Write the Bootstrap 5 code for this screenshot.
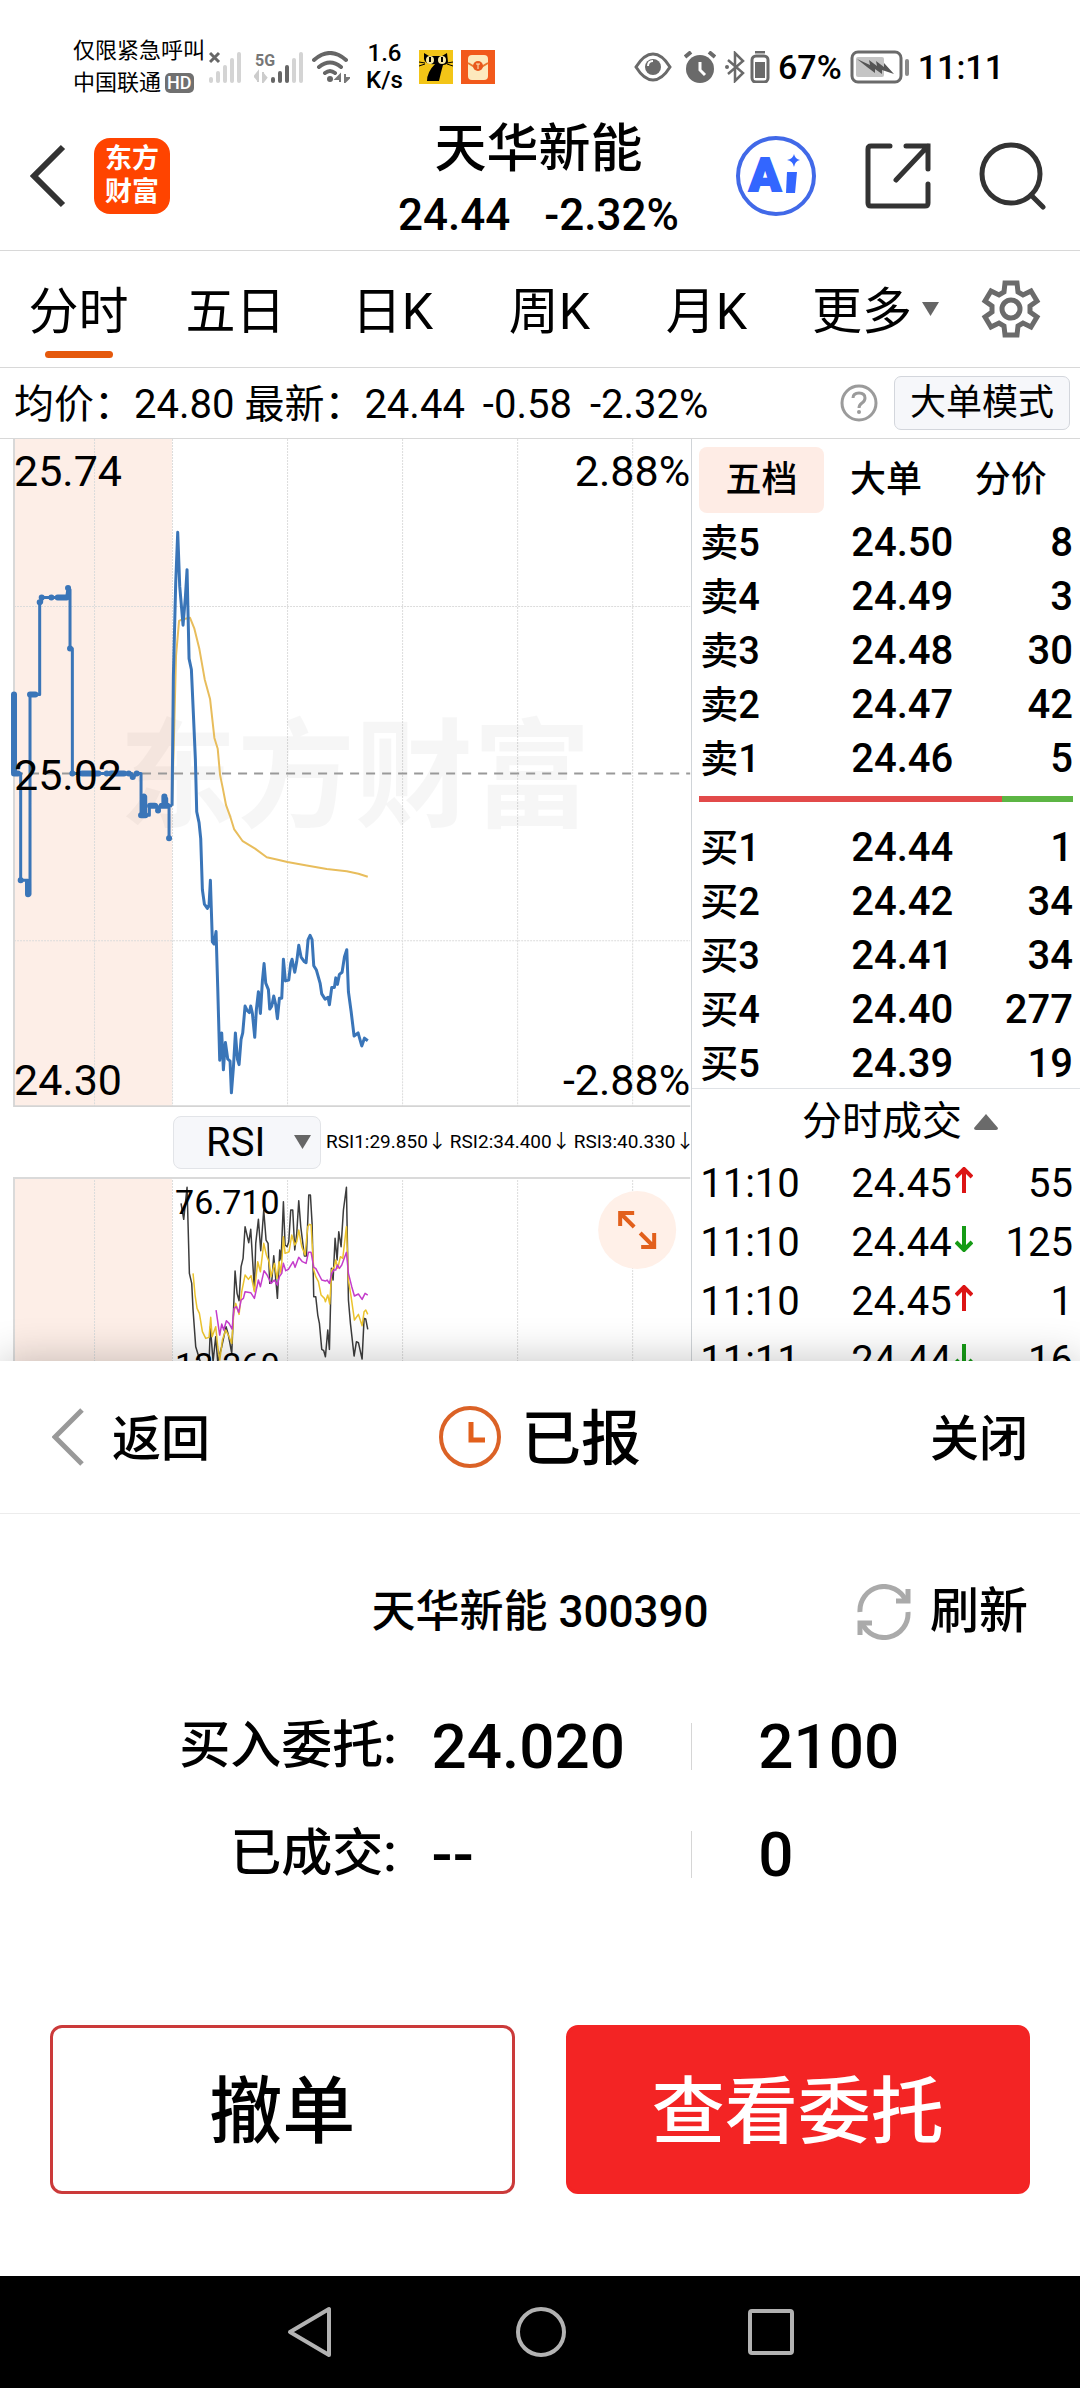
<!DOCTYPE html>
<html lang="zh-CN">
<head>
<meta charset="utf-8">
<meta name="viewport" content="width=device-width, initial-scale=1">
<title>天华新能 300390</title>
<link href="https://cdn.jsdelivr.net/npm/bootstrap@5.3.0/dist/css/bootstrap.min.css" rel="stylesheet">
<style>
  body { font-family: Roboto, "Noto Sans CJK SC", sans-serif; color: #000; background: #fff; }
  button { font-family: inherit; color: inherit; border: 0; background: none; padding: 0; }
  svg { display: block; flex: none; }
  .medium { font-weight: 500; }
  /* Han glyphs ride high in a Roboto line box */
  .han { display: block; padding-top: 6px; }

  /* status bar */
  .statusbar { height: 101px; padding: 32px 76px 0 73px; }
  .carrier { font-size: 22px; line-height: 32px; }
  .hd-tag { font-size: 18px; line-height: 20px; background: #707070; color: #fff; border-radius: 5px; padding: 0 2px; }
  .speed { font-size: 24px; line-height: 27px; }
  .clock { font-size: 34px; line-height: 40px; }

  /* title bar */
  .titlebar { height: 150px; padding: 0 33px 0 30px; border-bottom: 1px solid #d8d8d8; }
  .app-logo { width: 76px; height: 76px; margin-left: 28px; border-radius: 16px; background: #ff4400; color: #fff; font-size: 27px; line-height: 33px; font-weight: 700; }
  .stock-head { padding-top: 12px; }
  .stock-name { font-size: 52px; line-height: 66px; font-weight: 500; margin: 0; }
  .stock-quote { font-size: 44px; line-height: 64px; gap: 34px; }
  .tool-gap { gap: 48px; }

  /* period tabs */
  .periods { height: 117px; padding-right: 24px; border-bottom: 1px solid #d8d8d8; font-size: 50px; }
  .period { flex: 157 1 0; position: relative; }
  .period-more { flex: 181 1 0; gap: 10px; }
  .period-set { flex: 90 1 0; }
  .period.active::after { content: ""; position: absolute; left: 50%; bottom: 9px; width: 68px; height: 7px; margin-left: -34px; border-radius: 4px; background: #e5590c; }

  .infobar { height: 71px; padding: 0 10px 0 14px; border-bottom: 1px solid #d8d8d8; font-size: 40px; }
  .info-nums { gap: 18px; padding-top: 4px; }
  .mode-btn { font-size: 36px; line-height: 52px; padding: 0 15px; border: 1px solid #d3d6dc; border-radius: 7px; background: #f6f7fa; }

  /* market area, cut by the sheet */
  .market { flex: 1 1 0; min-height: 0; overflow: hidden; }
  .chart-col { width: 64%; }
  .chart-col > svg { width: 100%; height: auto; }
  .book-col { width: 36%; border-left: 1px solid #d0d4d8; }
  .rsi-bar { height: 70px; padding-left: 173px; gap: 5px; }
  .rsi-pick { flex: none; width: 148px; height: 53px; }
  .rsi-pick select { appearance: none; width: 100%; height: 100%; padding: 0 0 0 32px; font: 40px Roboto, sans-serif; color: #000; background: #f6f7fa; border: 1px solid #e2e4e8; border-radius: 8px; }
  .rsi-pick svg { position: absolute; right: 10px; top: 19px; pointer-events: none; }
  .rsi-vals { font-size: 19px; gap: 3px; }

  .book-tabs { padding: 8px 7px 0; }
  .book-tab { flex: 1 1 0; height: 66px; border-radius: 8px; font-size: 36px; font-weight: 500; }
  .book-tab.active { background: #feece5; }
  .quotes { width: 100%; table-layout: fixed; font-size: 40px; }
  .quotes th, .quotes td { padding: 6px 0 0; line-height: 48px; font-weight: 500; text-align: left; white-space: nowrap; }
  .quotes th { padding-left: 8px; font-size: 38px; width: 159px; }
  .quotes td:last-child { text-align: right; padding-right: 7px; }
  .strength { height: 6px; margin: 13px 7px 16px; }
  .strength-buy { background: #e24a4a; }
  .strength-sell { flex: 1 1 0; background: #5cb544; }
  .deals-head { width: 100%; height: 66px; padding-left: 28px; border-top: 1px solid #dfe2e6; font-size: 40px; gap: 12px; }
  .quotes.deals th, .quotes.deals td { padding-top: 0; line-height: 59px; font-weight: 400; font-size: 40px; }
  .deals svg { display: inline-block; margin: 0 0 4px 3px; vertical-align: baseline; }

  /* order sheet */
  .sheet { position: relative; background: #fff; box-shadow: 0 0 40px rgba(0, 0, 0, .24); }
  .sheet-head { height: 153px; padding: 0 52px; border-bottom: 1px solid #ececec; }
  .sheet-link { font-size: 49px; font-weight: 500; gap: 28px; }
  .sheet-title { font-size: 60px; font-weight: 500; gap: 20px; margin: 0; }
  .sheet-side { flex: 1 1 0; }
  .order-name { font-size: 44px; height: 76px; margin-top: 60px; padding: 0 52px; }
  .order-name .sheet-link { gap: 18px; }
  .order-rows { padding-top: 42px; }
  .order-row { height: 108px; font-size: 62px; font-weight: 500; }
  .order-label { width: 37%; padding-right: 3px; font-size: 51px; text-align: right; }
  .order-price { width: 27%; padding-left: 32px; }
  .order-qty { padding-left: 66px; }
  .order-rule { width: 1px; height: 47px; background: #d6d6d6; }
  .order-actions { padding: 117px 50px 82px; gap: 51px; }
  .act { flex: 1 1 0; height: 169px; border-radius: 12px; font-size: 73px; font-weight: 500; }
  .act-cancel { border: 3px solid #cb3a3a; }
  .act-view { background: #f32424; border: 3px solid #f32424; color: #fff; }

  .navkeys { height: 112px; background: #000; gap: 182px; }
</style>
<script src="https://cdn.jsdelivr.net/npm/bootstrap@5.3.0/dist/js/bootstrap.bundle.min.js"></script>
</head>
<body class="d-flex flex-column vh-100 overflow-hidden">

<div class="statusbar d-flex align-items-center justify-content-between">
  <div class="d-flex align-items-center">
    <div class="carrier text-nowrap">
      <div>仅限紧急呼叫</div>
      <div class="d-flex align-items-center">中国联通<span class="hd-tag medium ms-1">HD</span></div>
    </div>
    <svg class="ms-1" width="33" height="32" viewBox="0 0 33 32"><path d="M1 2l9 9M10 2l-9 9" stroke="#666" stroke-width="3"/><g fill="#d4d4d4"><rect y="26" width="4" height="6" rx="2"/><rect x="7" y="20" width="4" height="12" rx="2"/><rect x="14" y="14" width="4" height="18" rx="2"/><rect x="21" y="7" width="4" height="25" rx="2"/><rect x="28" y="1" width="4" height="31" rx="2"/></g></svg>
    <svg class="ms-2 ps-1" width="54" height="32" viewBox="0 0 50 32"><text x="1" y="15" font-size="16" font-weight="700" fill="#777" font-family="Roboto">5G</text><path d="M4 31V21l-4 5M9 21v10l4-5" stroke="#ccc" stroke-width="2" fill="#ccc"/><g fill="#666"><rect x="17" y="26" width="4" height="6" rx="2"/><rect x="24" y="20" width="4" height="12" rx="2"/><rect x="31" y="14" width="4" height="18" rx="2"/></g><g fill="#d4d4d4"><rect x="38" y="7" width="4" height="25" rx="2"/><rect x="45" y="1" width="4" height="31" rx="2"/></g></svg>
    <svg class="ms-2" width="38" height="32" viewBox="0 0 38 32"><g fill="none" stroke="#666" stroke-width="4" stroke-linecap="round"><path d="M2 9q16-14 32 0M7 16q11-9 22 0M13 22q5-4 10 0"/></g><circle cx="18" cy="28" r="3" fill="#666"/><path d="M28 31v-7l-4 4h4M33 23v8l4-4h-4" stroke="#777" stroke-width="2" fill="#777"/></svg>
    <div class="speed medium text-center ms-3">1.6<br>K/s</div>
    <svg class="ms-3" width="34" height="34" viewBox="0 0 34 34"><rect width="34" height="34" fill="#f3c517"/><path d="M5 3l5 3h13l5-3 1 9q-1 3-5 3-2 7-4 16h-12q0-9 8-17-10 1-11-5z" fill="#000"/><path d="M0 12l6 1M0 16l6-2M34 12l-6 1M34 16l-6-2" stroke="#000"/><circle cx="11" cy="10" r="4" fill="#f8e9a0"/><circle cx="23" cy="10" r="4" fill="#f8e9a0"/><path d="M11 7v5M23 7v5" stroke="#000" stroke-width="2"/></svg>
    <svg class="ms-2" width="34" height="34" viewBox="0 0 34 34"><rect width="34" height="34" fill="#f2591b"/><rect x="7" y="5" width="20" height="25" rx="4" fill="#fde9bd"/><path d="M7 13l10 6 10-6" fill="none" stroke="#e9762c" stroke-width="2"/><circle cx="17" cy="16" r="5" fill="#e9571c"/><path d="M15 14h4M17 14v5" stroke="#fde9bd"/></svg>
  </div>
  <div class="d-flex align-items-center">
    <svg width="38" height="32" viewBox="0 0 38 32"><path d="M2 16Q10 3 19 3T36 16Q28 29 19 29T2 16z" fill="none" stroke="#6a6a6a" stroke-width="3"/><circle cx="19" cy="16" r="8" fill="#6a6a6a"/><path d="M14 15q0-5 5-5" fill="none" stroke="#fff" stroke-width="2"/></svg>
    <svg class="ms-2 ps-1" width="36" height="32" viewBox="0 0 32 32"><circle cx="16" cy="18" r="14" fill="#6a6a6a"/><path d="M1 6l6-5M31 6l-6-5" stroke="#6a6a6a" stroke-width="4"/><path d="M16 11v8l5 5" fill="none" stroke="#fff" stroke-width="3"/></svg>
    <svg class="ms-2" width="22" height="32" viewBox="0 0 22 32"><path d="M4 9l15 13-8 8V2l8 8L4 23" fill="none" stroke="#6a6a6a" stroke-width="2.5"/><circle cx="3" cy="16" r="2" fill="#6a6a6a"/></svg>
    <svg class="ms-1" width="20" height="32" viewBox="0 0 20 32"><path d="M5 1h10" stroke="#6a6a6a" stroke-width="3"/><rect x="2" y="5" width="16" height="26" rx="4" fill="none" stroke="#6a6a6a" stroke-width="3"/><rect x="5" y="11" width="10" height="16" fill="#6a6a6a"/></svg>
    <span class="clock medium ms-2">67%</span>
    <svg class="ms-2" width="60" height="34" viewBox="0 0 60 34"><rect x="2" y="2" width="49" height="30" rx="6" fill="none" stroke="#6a6a6a" stroke-width="3"/><rect x="6" y="7" width="28" height="20" rx="2" fill="#c4c4c4"/><path d="M7 9l13 6-1-5 8 6-1-5 8 6v-4l10 11-12-4v4l-7-5v4l-8-6z" fill="#555"/><rect x="55" y="9" width="4" height="17" rx="2" fill="#8a8a8a"/></svg>
    <span class="clock medium ms-2">11:11</span>
  </div>
</div>

<header class="titlebar d-flex align-items-center">
  <div class="sheet-side d-flex align-items-center">
    <button aria-label="返回上一页"><svg width="36" height="64" viewBox="0 0 36 64"><path d="M33 3L4 32l29 29" fill="none" stroke="#333" stroke-width="6"/></svg></button>
    <div class="app-logo d-flex flex-column align-items-center justify-content-center"><span>东方</span><span>财富</span></div>
  </div>
  <div class="stock-head text-center">
    <h1 class="stock-name">天华新能</h1>
    <div class="stock-quote medium d-flex justify-content-center"><span>24.44</span><span>-2.32%</span></div>
  </div>
  <div class="sheet-side d-flex align-items-center justify-content-end tool-gap">
    <button aria-label="AI 助手"><svg width="82" height="82" viewBox="0 0 82 82"><circle cx="41" cy="41" r="38" fill="none" stroke="#4169e8" stroke-width="4"/><text x="14" y="56" font-size="47" font-weight="900" font-family="Roboto" fill="#3366ff" stroke="#3366ff" stroke-width="2">A</text><path d="M52 37h10l-2 21h-9z" fill="#3366ff"/><path d="M59 19q1 5 6 6-5 1-6 7-1-6-7-7 6-1 7-6z" fill="#3366ff"/></svg></button>
    <button aria-label="分享"><svg width="66" height="66" viewBox="0 0 66 66"><path d="M25 3H6q-3 0-3 3v54q0 3 3 3h54q3 0 3-3V41M41 3h22v23M63 3L31 37" fill="none" stroke="#333" stroke-width="5" stroke-linecap="round"/></svg></button>
    <button aria-label="搜索"><svg width="68" height="68" viewBox="0 0 68 68"><circle cx="32" cy="32" r="29" fill="none" stroke="#333" stroke-width="5"/><path d="M52 53l12 12" stroke="#333" stroke-width="5" stroke-linecap="round"/></svg></button>
  </div>
</header>

<nav class="periods d-flex">
  <button class="period active"><span class="han">分时</span></button>
  <button class="period"><span class="han">五日</span></button>
  <button class="period"><span class="han">日K</span></button>
  <button class="period"><span class="han">周K</span></button>
  <button class="period"><span class="han">月K</span></button>
  <button class="period-more d-flex align-items-center justify-content-center"><span class="han">更多</span><svg width="17" height="14" viewBox="0 0 17 14"><path d="M0 0h17L8.500 14z" fill="#666"/></svg></button>
  <button class="period-set d-flex align-items-center justify-content-center" aria-label="设置"><svg width="60" height="60" viewBox="0 0 60 60"><g fill="none" stroke="#6b6b6b" stroke-width="5"><circle cx="30" cy="30" r="9"/><path d="M24 4h12l1 9 5 3 8-4 6 10-7 5v6l7 5-6 10-8-4-5 3-1 9H24l-1-9-5-3-8 4-6-10 7-5v-6l-7-5 6-10 8 4 5-3z"/></g></svg></button>
</nav>

<div class="infobar d-flex align-items-center justify-content-between">
  <div class="info-nums d-flex text-nowrap"><span>均价：24.80 最新：24.44</span><span>-0.58</span><span>-2.32%</span></div>
  <div class="d-flex align-items-center gap-3">
    <svg width="38" height="38" viewBox="0 0 38 38"><circle cx="19" cy="19" r="17" fill="none" stroke="#9b9b9b" stroke-width="3"/><path d="M13 14q0-5 6-5t6 5q0 3-3 5t-3 5" fill="none" stroke="#9b9b9b" stroke-width="3"/><circle cx="19" cy="28" r="2" fill="#9b9b9b"/></svg>
    <button class="mode-btn">大单模式</button>
  </div>
</div>

<main class="market d-flex">
  <section class="chart-col">
    <svg viewBox="0 439 691 668" font-family="Roboto" font-size="43">
      <rect x="14" y="439" width="158" height="668" fill="#fdeee7"/>
      <g fill="none" stroke="#dcdcdc" stroke-dasharray="2 1"><path d="M94.500 439V1107M172.500 439V1107M287.500 439V1107M402.500 439V1107M517.500 439V1107M632.500 439V1107M14 606.500H690M14 940.500H690"/></g>
      <path d="M14 439V1107" stroke="#d8d8d8" stroke-width="2"/>
      <path d="M14 1106H690" stroke="#d4d4d4" stroke-width="2"/>
      <text x="119" y="818" font-family="Noto Sans CJK SC" font-weight="700" font-size="118" fill="#000" fill-opacity=".035">东方财富</text>
      <path d="M14 773.500H690" stroke="#999" stroke-width="2" stroke-dasharray="9 7"/>
      <g transform="translate(0 430) scale(.33333 .43367)" fill="none" stroke-linejoin="round">
        <polyline vector-effect="non-scaling-stroke" stroke="#e8bd5c" stroke-width="2" points="516,866 522,700 528,520 537,440 545,437 570,433 583,458 598,505 614,575 630,620 643,710 653,735 660,795 668,825 678,865 690,890 702,920 728,948 765,965 800,985 830,990 862,996 920,1004 980,1012 1040,1017 1075,1023 1103,1030"/>
        <path vector-effect="non-scaling-stroke" stroke="#3a75b8" stroke-width="3" d="M42 610V792H62V1038H84V1070H90V610H119V397H125V386H200L204 364 210 368V504H217V792H395L400 800 408 792H423V888H432V845H437V888H448V866H470L474 878 480 866H490L493 845 500 850V866H507V941V866H516"/>
        <path vector-effect="non-scaling-stroke" stroke="#3a75b8" stroke-width="6" stroke-linecap="round" d="M42 610V790M42 792H54M62 1038h.1M84 1070V1042M90 610H106M119 397h.1M125 386h.1M154 386h.1M173 386H200M204 364h.1M210 504h.1M217 792h.1M246 792H295M320 792h.1M333 792H372M386 792h.1M398 800h.1M410 792h.1M423 888H436M431 845V885M450 866H465M474 877h.1M485 866H502M493 845V860M507 941h.1"/>
        <polyline vector-effect="non-scaling-stroke" stroke="#3a75b8" stroke-width="3" points="516,866 520,568 527,352 533,236 539,360 549,450 556,385 561,322 567,527 574,552 580,655 586,760 590,880 597,905 602,942 607,1060 613,1093 622,1103 627,1095 631,1038 634,1110 637,1180 642,1185 648,1156 653,1285 659,1453 665,1390 670,1475 676,1412 683,1450 690,1455 694,1528 700,1470 706,1390 712,1450 717,1463 723,1405 728,1390 735,1328 741,1338 748,1343 752,1328 757,1345 764,1400 769,1335 775,1295 781,1345 787,1270 792,1230 797,1275 805,1290 809,1335 815,1328 821,1305 827,1325 832,1357 838,1310 845,1310 850,1220 856,1270 866,1268 872,1230 876,1220 884,1250 890,1225 896,1188 903,1215 912,1225 918,1228 924,1175 930,1165 936,1175 941,1235 949,1245 960,1275 965,1300 975,1312 984,1308 988,1325 995,1285 1003,1285 1007,1263 1012,1278 1018,1255 1026,1250 1033,1215 1040,1198 1045,1295 1053,1340 1062,1397 1074,1390 1085,1420 1093,1402 1103,1408"/>
      </g>
      <text x="14" y="486">25.74</text><text x="14" y="790">25.02</text><text x="14" y="1095">24.30</text>
      <g text-anchor="end"><text x="690" y="486">2.88%</text><text x="690" y="1095">-2.88%</text></g>
    </svg>

    <div class="rsi-bar d-flex align-items-center">
      <label class="rsi-pick position-relative"><select aria-label="指标"><option>RSI</option></select><svg width="17" height="14" viewBox="0 0 17 14"><path d="M0 0h17L8.500 14z" fill="#666"/></svg></label>
      <div class="rsi-vals d-flex text-nowrap"><span>RSI1:29.850↓</span><span>RSI2:34.400↓</span><span>RSI3:40.330↓</span></div>
    </div>

    <svg viewBox="0 1177 691 260" font-family="Roboto" font-size="34">
      <rect x="14" y="1177" width="158" height="263" fill="#fdeee7"/>
      <path d="M94.500 1177V1440M172.500 1177V1440M287.500 1177V1440M402.500 1177V1440M517.500 1177V1440M632.500 1177V1440" stroke="#dcdcdc" stroke-dasharray="2 1"/>
      <path d="M14 1177V1440M14 1178H690" fill="none" stroke="#dadada" stroke-width="2"/>
      <circle cx="637" cy="1230" r="39" fill="#fff0e8"/>
      <path d="M620 1226V1213H634M621 1214L634 1227M641 1247H654V1233M640 1233L653 1246" fill="none" stroke="#e2601c" stroke-width="4"/>
      <g transform="translate(165 1180) scale(.33333)" fill="none" stroke-linejoin="round">
        <polyline vector-effect="non-scaling-stroke" stroke="#3c3c3c" stroke-width="1.500" points="48,70 56,118 66,22 73,280 80,310 84,390 92,500 105,543 120,560 132,545 136,440 144,545 152,470 158,545 170,500 183,440 190,465 200,520 205,400 210,273 216,340 222,362 228,260 234,235 240,140 251,188 257,148 268,330 272,190 280,118 287,212 296,90 303,180 309,190 314,310 320,305 326,227 337,355 344,210 348,240 355,65 360,195 366,200 371,185 377,90 383,90 389,210 395,160 401,62 407,140 418,228 424,228 431,45 436,45 441,130 446,350 452,350 458,405 463,430 470,508 476,512 481,530 488,450 493,508 499,265 504,300 510,175 516,240 521,155 528,200 535,90 544,22 550,360 556,430 567,528 574,485 580,488 591,537 597,415 602,417 608,448"/>
        <polyline vector-effect="non-scaling-stroke" stroke="#ebc32d" stroke-width="1.500" points="84,280 90,345 96,385 103,400 112,455 122,475 132,472 137,412 141,470 152,440 158,500 164,540 172,480 182,450 192,470 200,490 206,400 212,370 222,403 230,335 240,285 250,298 258,287 268,335 278,245 286,275 296,190 304,225 312,245 318,290 328,250 336,295 342,245 348,280 355,170 360,220 372,215 380,165 389,195 395,185 401,150 410,200 420,225 428,140 433,133 438,135 446,270 452,290 460,305 468,345 478,355 481,365 488,345 494,372 500,270 508,260 512,240 518,265 526,230 533,235 544,140 550,300 558,350 568,420 580,403 591,437 597,395 602,390 608,403"/>
        <polyline vector-effect="non-scaling-stroke" stroke="#c43ccb" stroke-width="1.500" points="153,390 164,465 170,432 176,450 184,422 192,430 201,447 207,385 214,380 221,397 228,360 235,355 240,335 257,338 268,355 280,300 286,320 297,272 306,285 318,310 328,300 337,315 343,290 350,280 355,250 362,272 370,268 384,245 390,262 401,232 412,245 423,250 430,217 438,217 446,262 452,265 470,300 481,303 486,300 493,310 500,280 506,270 512,270 517,255 523,265 530,255 544,217 550,280 560,320 568,348 580,342 591,358 600,340 608,345"/>
      </g>
      <text x="175" y="1214">76.710</text><text x="175" y="1377">12.260</text>
    </svg>
  </section>

  <aside class="book-col">
    <div class="book-tabs d-flex"><button class="book-tab active">五档</button><button class="book-tab">大单</button><button class="book-tab">分价</button></div>
    <table class="quotes">
      <tr><th>卖5</th><td>24.50</td><td>8</td></tr>
      <tr><th>卖4</th><td>24.49</td><td>3</td></tr>
      <tr><th>卖3</th><td>24.48</td><td>30</td></tr>
      <tr><th>卖2</th><td>24.47</td><td>42</td></tr>
      <tr><th>卖1</th><td>24.46</td><td>5</td></tr>
    </table>
    <div class="strength d-flex"><div class="strength-buy" style="width:81%"></div><div class="strength-sell"></div></div>
    <table class="quotes">
      <tr><th>买1</th><td>24.44</td><td>1</td></tr>
      <tr><th>买2</th><td>24.42</td><td>34</td></tr>
      <tr><th>买3</th><td>24.41</td><td>34</td></tr>
      <tr><th>买4</th><td>24.40</td><td>277</td></tr>
      <tr><th>买5</th><td>24.39</td><td>19</td></tr>
    </table>
    <button class="deals-head d-flex align-items-center justify-content-center">分时成交<svg width="24" height="16" viewBox="0 0 24 16"><path d="M12 0l12 14q0 2-2 2H2q-2 0-2-2z" fill="#6a6a6a"/></svg></button>
    <table class="quotes deals">
      <tr><th>11:10</th><td>24.45<svg width="18" height="26" viewBox="0 0 18 26"><path d="M9 26V3M1 10l8-8 8 8" fill="none" stroke="#dc1414" stroke-width="4"/></svg></td><td>55</td></tr>
      <tr><th>11:10</th><td>24.44<svg width="18" height="26" viewBox="0 0 18 26"><path d="M9 0v23M1 16l8 8 8-8" fill="none" stroke="#169b16" stroke-width="4"/></svg></td><td>125</td></tr>
      <tr><th>11:10</th><td>24.45<svg width="18" height="26" viewBox="0 0 18 26"><path d="M9 26V3M1 10l8-8 8 8" fill="none" stroke="#dc1414" stroke-width="4"/></svg></td><td>1</td></tr>
      <tr><th>11:11</th><td>24.44<svg width="18" height="26" viewBox="0 0 18 26"><path d="M9 0v23M1 16l8 8 8-8" fill="none" stroke="#169b16" stroke-width="4"/></svg></td><td>16</td></tr>
    </table>
  </aside>
</main>

<section class="sheet">
  <div class="sheet-head d-flex align-items-center">
    <div class="sheet-side"><button class="sheet-link d-flex align-items-center"><svg width="32" height="58" viewBox="0 0 32 58"><path d="M30 2L3 29l27 27" fill="none" stroke="#999" stroke-width="5"/></svg><span class="han">返回</span></button></div>
    <h2 class="sheet-title d-flex align-items-center"><svg width="62" height="62" viewBox="0 0 62 62"><circle cx="31" cy="31" r="29" fill="none" stroke="#db6226" stroke-width="4"/><path d="M32 16v18h14" fill="none" stroke="#e2601c" stroke-width="5"/></svg><span class="han">已报</span></h2>
    <div class="sheet-side d-flex justify-content-end"><button class="sheet-link"><span class="han">关闭</span></button></div>
  </div>
  <div class="order-name d-flex align-items-center">
    <div class="sheet-side"></div>
    <div class="medium">天华新能 300390</div>
    <div class="sheet-side d-flex justify-content-end"><button class="sheet-link d-flex align-items-center"><svg width="56" height="56" viewBox="0 0 56 56"><g fill="none" stroke="#aaa" stroke-width="5"><path d="M4 28A24 24 0 0 1 50 17M52 28A24 24 0 0 1 6 39"/><path d="M52 5v12H40M4 51V39H16"/></g></svg>刷新</button></div>
  </div>
  <div class="order-rows">
    <div class="order-row d-flex align-items-center"><div class="order-label">买入委托:</div><div class="order-price">24.020</div><div class="order-rule"></div><div class="order-qty">2100</div></div>
    <div class="order-row d-flex align-items-center"><div class="order-label">已成交:</div><div class="order-price">--</div><div class="order-rule"></div><div class="order-qty">0</div></div>
  </div>
  <div class="order-actions d-flex"><button class="act act-cancel"><span class="han">撤单</span></button><button class="act act-view"><span class="han">查看委托</span></button></div>
</section>

<nav class="navkeys d-flex align-items-center justify-content-center">
  <button aria-label="后退"><svg width="48" height="52" viewBox="0 0 48 52"><path d="M43 3v46L4 26z" fill="none" stroke="#b3b3b3" stroke-width="4" stroke-linejoin="round"/></svg></button>
  <button aria-label="主屏幕"><svg width="50" height="50" viewBox="0 0 50 50"><circle cx="25" cy="25" r="23" fill="none" stroke="#b3b3b3" stroke-width="4"/></svg></button>
  <button aria-label="最近任务"><svg width="46" height="46" viewBox="0 0 46 46"><rect x="2" y="2" width="42" height="42" rx="2" fill="none" stroke="#b3b3b3" stroke-width="4"/></svg></button>
</nav>
</body>
</html>
